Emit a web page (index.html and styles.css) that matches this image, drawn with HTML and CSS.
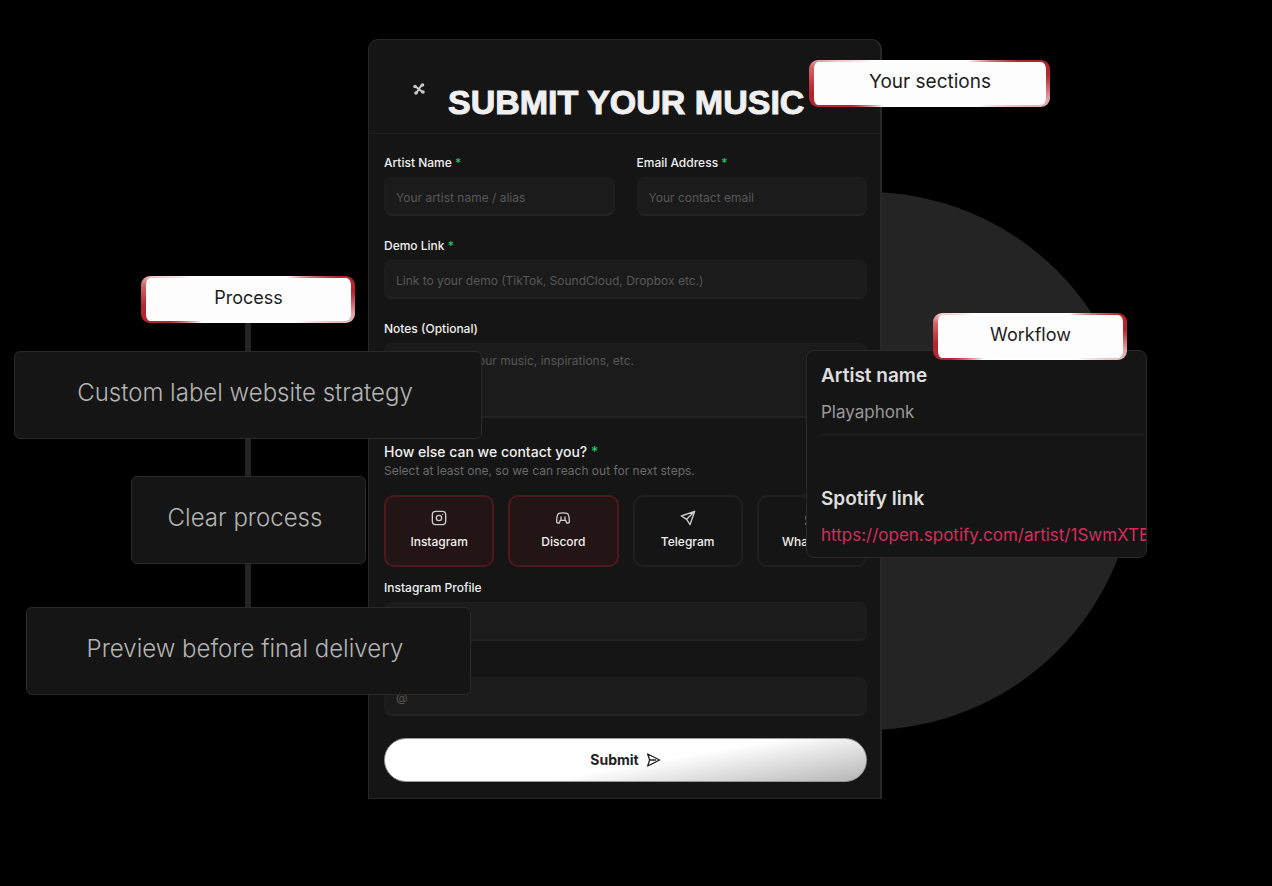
FILE: index.html
```html
<!DOCTYPE html>
<html lang="en">
<head>
  <meta charset="UTF-8" />
  <meta name="viewport" content="width=device-width, initial-scale=1" />
  <title>Submit your music</title>
  <link rel="stylesheet" href="styles.css">
</head>
<body>

  <main class="stage">
    <div class="scene">
      <div class="circle"></div>

      <form class="panel">
        <header class="panel-header">
          <svg class="spark" viewBox="0 0 14 14" width="14" height="14" aria-hidden="true">
            <path d="M3 4 11 10.500M10 2.500 4 11.500" />
            <circle cx="3" cy="4.500" r=".8" />
            <circle cx="10.500" cy="3" r=".8" />
            <circle cx="4" cy="11" r=".8" />
            <circle cx="11" cy="10" r=".8" />
          </svg>
          <h1>SUBMIT YOUR MUSIC</h1>
        </header>

        <div class="panel-body">
          <div class="row">
            <div class="field">
              <label for="artist">Artist Name <span class="req">*</span></label>
              <input type="text" id="artist" placeholder="Your artist name / alias" />
            </div>
            <div class="field">
              <label for="email">Email Address <span class="req">*</span></label>
              <input type="email" id="email" placeholder="Your contact email" />
            </div>
          </div>

          <div class="field">
            <label for="demo">Demo Link <span class="req">*</span></label>
            <input type="text" id="demo" placeholder="Link to your demo (TikTok, SoundCloud, Dropbox etc.)" />
          </div>

          <div class="field">
            <label for="notes">Notes (Optional)</label>
            <textarea id="notes" placeholder="Tell us about your music, inspirations, etc."></textarea>
          </div>

          <fieldset class="contact">
            <legend>How else can we contact you? <span class="req">*</span></legend>
            <p class="hint">Select at least one, so we can reach out for next steps.</p>
            <div class="tiles">
              <label class="tile">
                <input type="checkbox" name="contact" value="instagram" checked />
                <svg viewBox="0 0 24 24" width="16" height="16" aria-hidden="true">
                  <rect x="2" y="2" width="20" height="20" rx="5" />
                  <circle cx="12" cy="12" r="4" />
                  <path d="M17.500 6.500h.01" />
                </svg>
                Instagram
              </label>
              <label class="tile">
                <input type="checkbox" name="contact" value="discord" checked />
                <svg viewBox="0 0 24 24" width="16" height="16" aria-hidden="true">
                  <path d="M8 15.500 6.500 19.500C4 19.500 2.500 18.500 2.500 17.500 2.500 12 3 8 5 5.500 8 4 16 4 19 5.500c2 2.500 2.500 6.500 2.500 12 0 1-1.500 2-4 2L16 15.500M8 15.500h8" />
                  <path d="M9 10.500v4.500M15 10.500v4.500" />
                </svg>
                Discord
              </label>
              <label class="tile">
                <input type="checkbox" name="contact" value="telegram" />
                <svg viewBox="0 0 24 24" width="16" height="16" aria-hidden="true">
                  <path d="M22 2 2 9l8 5 5 8zM22 2 10 14" />
                </svg>
                Telegram
              </label>
              <label class="tile">
                <input type="checkbox" name="contact" value="whatsapp" />
                <svg viewBox="0 0 24 24" width="16" height="16" aria-hidden="true">
                  <path d="M3 21l1.600-4.500A9.500 9.500 0 1 1 8 20zM9 8c0 4 3 7 7 7" />
                </svg>
                WhatsApp
              </label>
            </div>
          </fieldset>

          <div class="field">
            <label for="instagram">Instagram Profile</label>
            <input type="text" id="instagram" />
          </div>

          <div class="field field-close">
            <label for="discord">Discord</label>
            <input type="text" id="discord" placeholder="@" />
          </div>

          <button type="button" class="submit">
            Submit
            <svg viewBox="0 0 24 24" width="16" height="16" aria-hidden="true">
              <path d="M4 3l18 9-18 9 3-9zM7 12h9" />
            </svg>
          </button>
        </div>
      </form>

      <div class="pill pill-sections">Your sections</div>

      <section class="process">
        <div class="pill pill-process">Process</div>
        <div class="line line-short"></div>
        <div class="step step-wide">Custom label website strategy</div>
        <div class="line"></div>
        <div class="step">Clear process</div>
        <div class="line line-long"></div>
        <div class="step step-mid">Preview before final delivery</div>
      </section>

      <section class="workflow">
        <h2>Artist name</h2>
        <p class="value">Playaphonk</p>
        <h2>Spotify link</h2>
        <a href="#">https://open.spotify.com/artist/1SwmXTE</a>
      </section>
      <div class="pill pill-workflow">Workflow</div>
    </div>
  </main>

</body>
</html>
```
FILE: styles.css
```css
* {
  box-sizing: border-box;
}
body {
  margin: 0;
  background-color: #000;
  color: #f0f0f0;
  font-family: Inter, "Liberation Sans", sans-serif;
  font-size: 13px;
  line-height: 16px;
}
.stage {
  display: flex;
  justify-content: center;
  min-height: 100vh;
  padding: 39px 22px 40px 0;
  overflow: hidden;
}
.scene {
  position: relative;
  width: 100%;
  max-width: 514px;
}
.circle {
  position: absolute;
  top: 153px;
  left: 230px;
  width: 538px;
  height: 538px;
  border-radius: 50%;
  background-color: #242424;
}

/* Form */
.panel {
  position: relative;
  border: 1px solid #282828;
  border-right: 2px solid #282828;
  border-radius: 10px 10px 0 0;
  background-color: #151515;
}
.panel-header {
  display: flex;
  gap: 22px;
  padding: 42px 43px 12px;
  border-bottom: 1px solid #1e1e1e;
}
.panel-header h1 {
  margin: 0;
  padding-top: 1px;
  font-family: "Liberation Sans", Arial, sans-serif;
  font-size: 34px;
  line-height: 38px;
  white-space: nowrap;
  -webkit-text-stroke: 1px #f0f0f0;
}
.spark {
  flex: none;
  fill: none;
  stroke: #ccc;
  stroke-width: 2;
}
.panel-body {
  display: flex;
  flex-direction: column;
  gap: 22px;
  padding: 21px 13px 16px 15px;
}
.row {
  display: grid;
  grid-template-columns: 1fr 1fr;
  gap: 22px;
}
.field {
  display: flex;
  flex-direction: column;
  gap: 6px;
}
.field-close {
  margin-top: -8px;
}
.field label {
  font-size: 12px;
  font-weight: 500;
}
.req {
  color: #22c55e;
}
input[type="text"],
input[type="email"],
textarea {
  width: 100%;
  height: 39px;
  padding: 2px 11px 0;
  border: 1px solid #1e1e1e;
  border-bottom: 2px solid #222;
  border-radius: 8px;
  background-color: #1b1b1b;
  color: #f0f0f0;
  font: inherit;
  font-size: 12px;
}
textarea {
  display: block;
  height: 75px;
  padding-top: 9px;
  resize: none;
}
::placeholder {
  color: #585858;
}
.contact {
  min-width: 0;
  margin: 3px 0 -9px;
  padding: 0;
  border: 0;
}
.contact legend {
  padding: 0;
  font-size: 14px;
  font-weight: 500;
  line-height: 18px;
}
.hint {
  margin: 2px 0 16px;
  color: #6a6a6a;
  font-size: 12px;
}
.tiles {
  display: grid;
  grid-template-columns: repeat(4, 1fr);
  gap: 14px;
}
.tile {
  display: flex;
  flex-direction: column;
  align-items: center;
  gap: 8px;
  height: 72px;
  padding: 13px 0;
  border: 2px solid #1f1f1f;
  border-radius: 10px;
  font-size: 12px;
  font-weight: 500;
}
.tile input {
  position: absolute;
  opacity: 0;
}
.tile:has(input:checked) {
  border-color: #4d191c;
  background-color: #231515;
}
.tile svg,
.submit svg {
  fill: none;
  stroke: currentColor;
  stroke-width: 2;
  stroke-linejoin: round;
  stroke-linecap: round;
}
.tile svg {
  color: #ccc;
}
.submit {
  display: flex;
  align-items: center;
  justify-content: center;
  gap: 6px;
  height: 44px;
  padding: 0;
  border: 1px solid #999;
  border-radius: 22px;
  background: linear-gradient(170deg, #fff 55%, #b5b5b5);
  color: #222;
  font: inherit;
  font-size: 14px;
  font-weight: 700;
}

/* Callouts over the form */
.pill {
  height: 47px;
  padding: 9px 0 0;
  border: solid transparent;
  border-width: 2px 4px 2px 5px;
  border-radius: 9px;
  background:
    linear-gradient(#fdfdfd, #fdfdfd) padding-box,
    conic-gradient(#fff 60deg, #b3262e 76deg, #b3262e 86deg, #e2a5a8 98deg, #e6b5b7 103deg, #fff 115deg, #fff 244deg, #b3262e 254deg, #b3262e 266deg, #d0666b 278deg, #f0cccd 284deg, #fff 292deg) border-box;
  color: #1c1c1c;
  font-size: 18px;
  line-height: 22px;
  text-align: center;
}
.pill-sections {
  position: absolute;
  top: 21px;
  left: 441px;
  width: 241px;
  font-size: 19px;
}
.pill-workflow {
  position: absolute;
  top: 274px;
  left: 565px;
  width: 194px;
}
.pill-process {
  width: 214px;
}
.process {
  position: absolute;
  top: 237px;
  left: -354px;
  display: flex;
  flex-direction: column;
  align-items: center;
  width: 468px;
}
.line {
  width: 6px;
  height: 37px;
  background-color: #242424;
}
.line-short {
  height: 28px;
}
.line-long {
  height: 43px;
}
.step {
  width: 235px;
  height: 88px;
  padding: 26px 6px 26px 0;
  border: 1px solid #2a2a2a;
  border-radius: 6px;
  background-color: #151515;
  color: #b4b4b4;
  font-size: 24px;
  font-weight: 300;
  line-height: 30px;
  text-align: center;
  white-space: nowrap;
}
.step-wide {
  width: 468px;
}
.step-mid {
  width: 445px;
}
.workflow {
  position: absolute;
  top: 311px;
  left: 438px;
  width: 341px;
  height: 208px;
  padding: 13px 0 0 14px;
  overflow: hidden;
  border: 1px solid #2a2a2a;
  border-radius: 8px;
  background-color: #151515;
  font-size: 17px;
  line-height: 24px;
}
.workflow h2 {
  margin: 0 0 12px;
  color: #dedede;
  font-size: 19px;
  font-weight: 600;
  line-height: 24px;
}
.workflow .value {
  margin: 0 2px 52px 0;
  padding-bottom: 10px;
  border-bottom: 1px solid #242424;
  color: #999;
}
.workflow a {
  color: #d52c5c;
  text-decoration: none;
  white-space: nowrap;
}
```
